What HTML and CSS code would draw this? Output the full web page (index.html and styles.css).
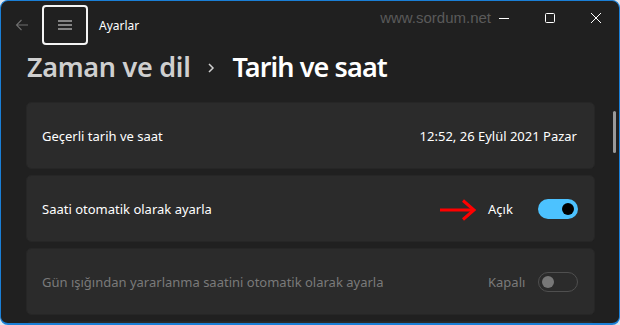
FILE: index.html
```html
<!DOCTYPE html>
<html lang="tr">
<head>
<meta charset="utf-8">
<link rel="stylesheet" href="styles.css">
</head>
<body>
<div class="window">
  <div class="titlebar">
    <div class="back">
      <svg width="14" height="14" viewBox="0 0 14 14"><path d="M13 7H1.5M6.5 2 1.5 7l5 5" fill="none" stroke="#6e6e6e" stroke-width="1.1"/></svg>
    </div>
    <div class="menu-btn">
      <svg width="16" height="12" viewBox="0 0 16 12"><path d="M1 2h14M1 6h14M1 10h14" stroke="#e6e6e6" stroke-width="1"/></svg>
    </div>
    <div class="app-title">Ayarlar</div>
    <div class="watermark">www.sordum.net</div>
    <div class="controls">
      <div class="ctl"><svg width="12" height="12" viewBox="0 0 12 12"><path d="M1 6.5h10" stroke="#fff" stroke-width="1"/></svg></div>
      <div class="ctl"><svg width="12" height="12" viewBox="0 0 12 12"><rect x="1.5" y="1.5" width="9" height="9" rx="1" fill="none" stroke="#fff" stroke-width="1"/></svg></div>
      <div class="ctl"><svg width="12" height="12" viewBox="0 0 12 12"><path d="M1 1l10 10M11 1 1 11" stroke="#fff" stroke-width="1"/></svg></div>
    </div>
  </div>
  <div class="content">
    <div class="main">
      <h1 class="crumbs"><span class="parent">Zaman ve dil</span><span class="sep"><svg width="10" height="12" viewBox="0 0 10 12"><path d="M3 2l4 4-4 4" fill="none" stroke="#cfcfcf" stroke-width="1.5"/></svg></span><span class="current">Tarih ve saat</span></h1>
      <div class="cards">
        <div class="card">
          <span class="label">Geçerli tarih ve saat</span>
          <span class="value">12:52, 26 Eylül 2021 Pazar</span>
        </div>
        <div class="card">
          <span class="label">Saati otomatik olarak ayarla</span>
          <div class="right">
            <svg class="arrow" width="38" height="22" viewBox="0 0 38 22"><path d="M0 11h33" stroke="#ff0000" stroke-width="3"/><path d="M23 1.5 34 11 23 20.5" fill="none" stroke="#ff0000" stroke-width="3"/></svg>
            <span class="state">Açık</span>
            <span class="toggle on"><span class="knob"></span></span>
          </div>
        </div>
        <div class="card disabled">
          <span class="label">Gün ışığından yararlanma saatini otomatik olarak ayarla</span>
          <div class="right">
            <span class="state">Kapalı</span>
            <span class="toggle off"><span class="knob"></span></span>
          </div>
        </div>
        <div class="card"></div>
      </div>
    </div>
    <div class="scroll"><div class="thumb"></div></div>
  </div>
</div>
</body>
</html>
```
FILE: styles.css
```css
* { box-sizing: border-box; }
html, body { margin: 0; padding: 0; }
body {
  width: 620px;
  height: 325px;
  background: #dfe6ee;
  overflow: hidden;
  font-family: "Noto Sans", "Open Sans", sans-serif;
}
.window {
  width: 620px;
  height: 325px;
  background: #202020;
  border: 1px solid #1a7fd6;
  border-bottom-width: 2px;
  border-radius: 8px;
  overflow: hidden;
  display: flex;
  flex-direction: column;
  color: #fff;
}
.titlebar {
  height: 46px;
  flex: none;
  display: flex;
  align-items: center;
  padding-top: 1px;
}
.back {
  width: 40px;
  display: flex;
  justify-content: center;
  padding-left: 1px;
}
.menu-btn {
  width: 46px;
  height: 40px;
  border: 2px solid #f4f4f4;
  border-radius: 4px;
  display: flex;
  align-items: center;
  justify-content: center;
  margin-left: 1px;
}
.app-title {
  font-size: 12px;
  margin-left: 11px;
  color: #fff;
  padding-top: 2px;
}
.watermark {
  margin-left: auto;
  align-self: flex-start;
  margin-top: 7px;
  font-family: "Liberation Sans", Arial, sans-serif;
  font-size: 15px;
  color: #5a5a5a;
  margin-right: -10px;
  letter-spacing: 0;
}
.controls { display: flex; align-self: flex-start; }
.ctl {
  width: 46px;
  height: 32px;
  display: flex;
  align-items: center;
  justify-content: center;
}
.content {
  flex: 1;
  display: flex;
  min-height: 0;
}
.main {
  flex: 1;
  padding-left: 25px;
  padding-right: 0;
}
.crumbs {
  margin: 0;
  height: 55px;
  display: flex;
  align-items: center;
  font-size: 27px;
  font-weight: 600;
  letter-spacing: -0.3px;
  padding-left: 1px;
  padding-bottom: 17px;
}
.parent { color: #cfcfcf; }
.sep { display: flex; margin: 0 16px 0 16px; padding-top: 3px; }
.current { color: #fff; letter-spacing: -0.9px; }
.cards {
  display: flex;
  flex-direction: column;
  gap: 6px;
}
.card {
  height: 67px;
  background: #2b2b2b;
  border: 1px solid #262626;
  border-radius: 5px;
  display: flex;
  align-items: center;
  justify-content: space-between;
  padding: 0 16px 0 15px;
  font-size: 13px;
  color: #fff;
}
.card .value { padding-right: 1px; }
.right { display: flex; align-items: center; }
.arrow { margin-right: 10px; margin-top: 2px; }
.state { width: 50px; }
.toggle {
  width: 40px;
  height: 20px;
  border-radius: 10px;
  display: flex;
  align-items: center;
}
.toggle.on { background: #4cc2ff; justify-content: flex-end; padding-right: 4px; }
.toggle.on .knob { width: 12px; height: 12px; border-radius: 50%; background: #000; }
.toggle.off { border: 1px solid #4f4f4f; padding-left: 3px; }
.toggle.off .knob { width: 12px; height: 12px; border-radius: 50%; background: #777; }
.disabled .label, .disabled .state { color: #7a7a7a; }
.scroll {
  width: 24px;
  flex: none;
  padding-top: 64px;
  display: flex;
  justify-content: flex-end;
  padding-right: 3px;
}
.thumb {
  width: 3px;
  height: 42px;
  background: #9a9a9a;
  border-radius: 2px;
}
```
